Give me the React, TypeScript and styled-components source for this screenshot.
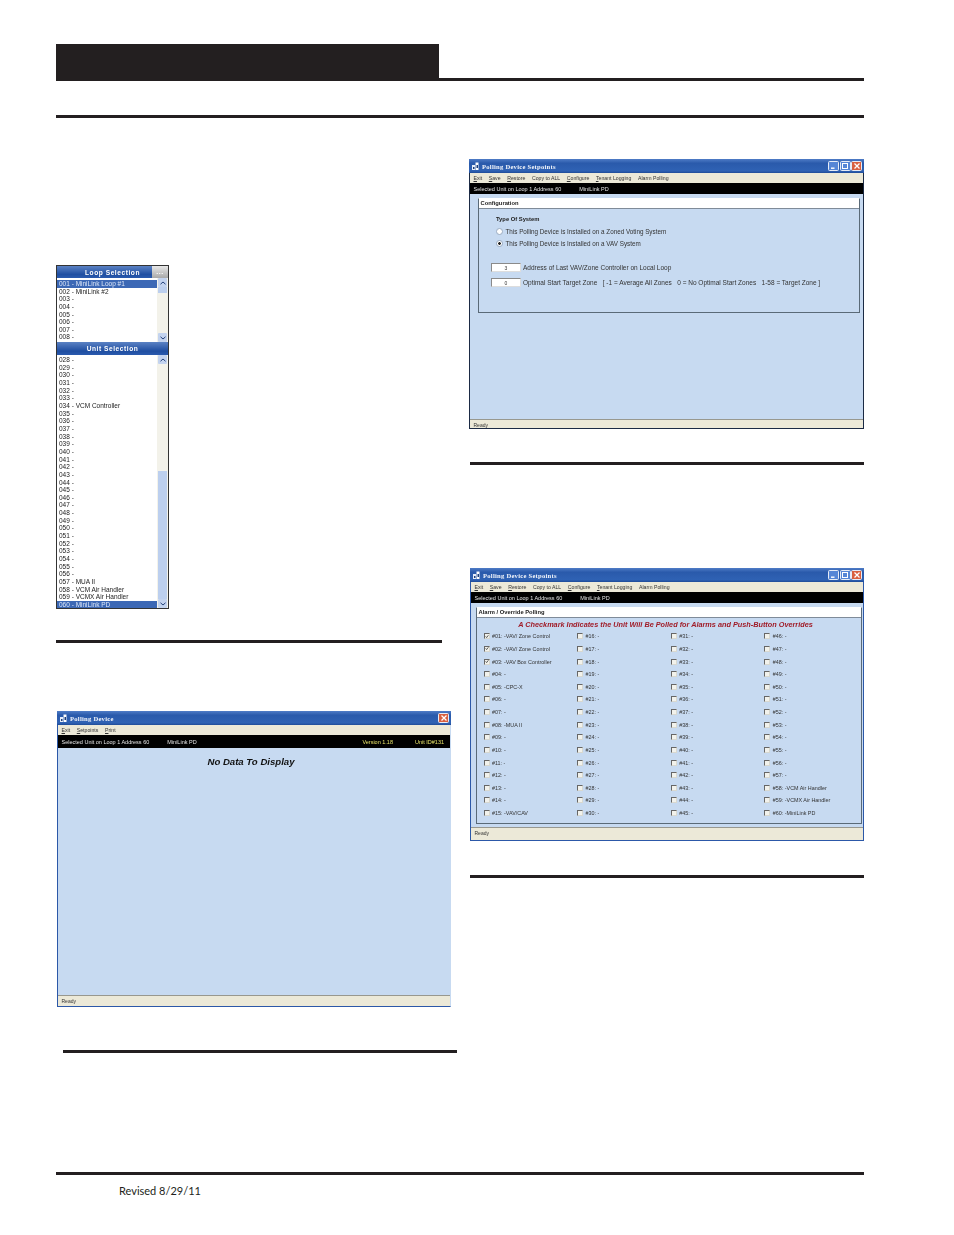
import React from 'react'
import styled, { createGlobalStyle } from 'styled-components'

const GlobalStyle = createGlobalStyle`
    html, body { margin: 0; padding: 0; background: #fff; }
    body { font-family: "Liberation Sans", Arial, sans-serif; }
`

const Page = styled.div`
    width: 954px;
    height: 1235px;
    box-sizing: border-box;
    padding: 44px 90px 0 56px;
    display: flex;
    flex-direction: column;
    overflow: hidden;
`
const Header = styled.div`
    height: 34px;
    border-bottom: 3px solid #231f20;
`
const HeaderBlock = styled.div`
    width: 383px;
    height: 34px;
    background: #231f20;
`
const Rule = styled.div<{ $top: number; $left?: number; $width?: number }>`
    height: 3px;
    flex: none;
    background: #231f20;
    margin-top: ${p => p.$top}px;
    margin-left: ${p => p.$left || 0}px;
    width: ${p => (p.$width ? p.$width + 'px' : 'auto')};
`
const Columns = styled.div`
    display: flex;
    height: 1054px;
`
const LeftCol = styled.div`
    width: 414px;
    flex: none;
    display: flex;
    flex-direction: column;
`
const RightCol = styled.div`
    flex: 1;
    display: flex;
    flex-direction: column;
`
const Footer = styled.div`
    font: 11px Lato, "Liberation Sans", sans-serif;
    color: #231f20;
    margin: 9px 0 0 63px;
`

/* loop / unit picker */
const Picker = styled.div`
    width: 111px;
    height: 342px;
    margin-top: 147px;
    border: 1px solid #333;
    background: #fff;
    display: flex;
    flex-direction: column;
    filter: blur(0.25px);
`
const PickerHead = styled.div<{ $h: number }>`
    height: ${p => p.$h}px;
    flex: none;
    display: flex;
    background: linear-gradient(#5b82c4, #1f4ea1 70%, #2a5aae);
    color: #fff;
    font: bold 6.6px "Liberation Sans", sans-serif;
    letter-spacing: 0.55px;
    align-items: center;
    justify-content: center;
    position: relative;
`
const MoreBtn = styled.span`
    position: absolute;
    right: 0;
    top: 0;
    width: 16px;
    height: 12px;
    background: linear-gradient(#e8e8e8, #a9a9a9);
    color: #fff;
    font-size: 7px;
    text-align: center;
    line-height: 12px;
`
const ListWrap = styled.div<{ $h: number }>`
    height: ${p => p.$h}px;
    flex: none;
    display: flex;
    background: #fff;
    overflow: hidden;
`
const ListBody = styled.div<{ $pt: number }>`
    flex: 1;
    padding-top: ${p => p.$pt}px;
    min-width: 0;
`
const ListRow = styled.div<{ $on?: boolean; $h: number }>`
    height: ${p => p.$h}px;
    line-height: ${p => p.$h}px;
    font-size: 6.5px;
    white-space: nowrap;
    padding-left: 2px;
    color: ${p => (p.$on ? '#dce6f7' : '#222')};
    background: ${p => (p.$on ? '#3c68b5' : 'transparent')};
`
const ScrollTrack = styled.div`
    width: 11px;
    flex: none;
    background: #f3f2ea;
    display: flex;
    flex-direction: column;
    position: relative;
`
const ScrollBtn = styled.div`
    width: 9px;
    height: 9px;
    margin-left: 1px;
    background: #c3d3ef;
    border-radius: 1px;
    display: flex;
    align-items: center;
    justify-content: center;
    flex: none;
`
const ScrollThumb = styled.div<{ $top: number; $h: number }>`
    position: absolute;
    left: 1px;
    top: ${p => p.$top}px;
    width: 9px;
    height: ${p => p.$h}px;
    background: #bccfee;
`
const Spacer = styled.div`
    flex: 1;
`

/* xp style windows */
const Win = styled.div<{ $w: number; $h: number; $top: number; $left: number; $edge: string; $open?: boolean }>`
    width: ${p => p.$w}px;
    height: ${p => p.$h}px;
    flex: none;
    box-sizing: border-box;
    margin-top: ${p => p.$top}px;
    margin-left: ${p => p.$left}px;
    border: 1px solid ${p => p.$edge};
    border-left-width: 1.5px;
    border-top: 0;
    border-right-color: ${p => (p.$open ? 'transparent' : p.$edge)};
    background: #c7daf1;
    display: flex;
    flex-direction: column;
    filter: blur(0.3px);
`
const TitleBar = styled.div`
    height: 14px;
    flex: none;
    margin: 0 -1px;
    padding: 0 2px 0 3px;
    display: flex;
    align-items: center;
    gap: 2px;
    background: linear-gradient(#4f7cc6, #2a5aab 30%, #2f62b4 85%, #1f4b98);
    color: #f2f5fb;
    font: bold 6.6px "Liberation Serif", serif;
    letter-spacing: 0.25px;
`
const TitleText = styled.span`
    flex: 1;
`
const WinBtn = styled.span<{ $close?: boolean }>`
    width: 11px;
    height: 10.5px;
    box-sizing: border-box;
    border: 0.5px solid #e6ecf7;
    border-radius: 1.5px;
    background: ${p => (p.$close ? '#d9603f' : '#5686d6')};
    display: flex;
    align-items: center;
    justify-content: center;
    margin-left: -1.5px;
`
const MenuBar = styled.div`
    height: 10px;
    flex: none;
    background: #ece9d8;
    display: flex;
    align-items: center;
    gap: 6.6px;
    padding-left: 3.5px;
    font-size: 5.2px;
    color: #333;
`
const InfoBar = styled.div<{ $h: number }>`
    height: ${p => p.$h}px;
    flex: none;
    background: #000;
    color: #e4e4e4;
    font-size: 5.5px;
    display: flex;
    align-items: center;
    padding: 0 6px 0 3.5px;
`
const InfoUnit = styled.span`
    margin-left: 18px;
    flex: 1;
`
const InfoExtra = styled.span`
    color: #e6e26a;
    margin-left: 22px;
`
const Content = styled.div`
    flex: 1;
    min-height: 0;
    display: flex;
    flex-direction: column;
`
const EmptyNote = styled.div`
    text-align: center;
    font: italic bold 9.6px "Liberation Sans", sans-serif;
    color: #111;
    margin: 8px 6px 0 0;
`
const Status = styled.div<{ $h: number }>`
    height: ${p => p.$h}px;
    flex: none;
    overflow: hidden;
    border-top: 1px solid #98988f;
    background: #ece9d8;
    font-size: 5px;
    line-height: 10px;
    padding-left: 3.5px;
    color: #333;
`
const Group = styled.div<{ $mt: number; $ml: number; $mr: number; $h: number }>`
    margin: ${p => p.$mt}px ${p => p.$mr}px 0 ${p => p.$ml}px;
    height: ${p => p.$h}px;
    box-sizing: border-box;
    border: 1px solid #5a6a78;
    border-top-color: #fff;
`
const GroupHead = styled.div`
    height: 9px;
    background: #fff;
    border-bottom: 1px solid #7f8b99;
    font: bold 5.8px/9px "Liberation Sans", sans-serif;
    padding-left: 1.5px;
    color: #222;
`
const TypeBlock = styled.div`
    padding: 7px 0 0 17px;
    display: flex;
    flex-direction: column;
    gap: 6px;
    height: 54px;
    box-sizing: border-box;
`
const TypeTitle = styled.div`
    font: bold 5.8px "Liberation Sans", sans-serif;
    color: #222;
    margin-bottom: 0.5px;
`
const RadioRow = styled.div`
    display: flex;
    align-items: center;
    gap: 2.5px;
    font-size: 6.3px;
    height: 6px;
    color: #333;
`
const Radio = styled.span<{ $on?: boolean }>`
    width: 5px;
    height: 5px;
    border-radius: 50%;
    background: ${p => (p.$on ? 'radial-gradient(#222 30%, #fff 45%)' : '#fff')};
    border: 0.5px solid #9aabc2;
`
const FieldRow = styled.div`
    display: flex;
    align-items: center;
    gap: 2px;
    margin: 0 0 6px 12px;
    height: 9px;
    font-size: 6.5px;
    white-space: pre;
    color: #333;
`
const Field = styled.span`
    width: 30px;
    height: 9px;
    box-sizing: border-box;
    background: #fff;
    border: 0.5px solid #8a8a8a;
    border-right-color: #ddd;
    border-bottom-color: #ddd;
    text-align: center;
    font-size: 5px;
    line-height: 8px;
`
const Banner = styled.div`
    font: italic bold 7.3px "Liberation Sans", sans-serif;
    color: #a01c28;
    text-align: center;
    height: 12px;
    line-height: 13px;
    margin-right: 7px;
`
const CheckGrid = styled.div`
    display: grid;
    grid-template-rows: repeat(15, 12.64px);
    grid-template-columns: repeat(4, 93.6px);
    grid-auto-flow: column;
    padding-left: 6.5px;
`
const CheckItem = styled.div`
    display: flex;
    align-items: center;
    gap: 2.5px;
    font-size: 5.4px;
    white-space: nowrap;
    color: #333;
`
const Box = styled.span`
    width: 6px;
    height: 6px;
    flex: none;
    box-sizing: border-box;
    background: #f2f2ec;
    border: 0.6px solid #d8d8d0;
    border-top-color: #666;
    border-left-color: #666;
    display: flex;
    align-items: center;
    justify-content: center;
`

const Chevron = ({ up }: { up?: boolean }) => (
    <svg width="6" height="4" viewBox="0 0 6 4">
        <path d={up ? 'M0.5 3.2 3 1 5.5 3.2' : 'M0.5 0.8 3 3 5.5 0.8'} fill="none" stroke="#23407a" strokeWidth="1" />
    </svg>
)

const AppIcon = () => (
    <svg width="8" height="8" viewBox="0 0 8 8">
        <rect x="0" y="3" width="3" height="5" fill="#e8eef8" />
        <rect x="3.5" y="0.5" width="3" height="7.5" fill="#fff" />
        <rect x="1" y="5" width="1.5" height="2" fill="#1d3f7a" />
        <rect x="4.5" y="3" width="1.5" height="3" fill="#1d3f7a" />
    </svg>
)

const Controls = ({ closeOnly }: { closeOnly?: boolean }) => (
    <>
        {!closeOnly && (
            <WinBtn>
                <svg width="8" height="8" viewBox="0 0 8 8"><rect x="1" y="5.5" width="3.5" height="1.4" fill="#fff" /></svg>
            </WinBtn>
        )}
        {!closeOnly && (
            <WinBtn>
                <svg width="8" height="8" viewBox="0 0 8 8"><rect x="1.5" y="1.5" width="5" height="5" fill="none" stroke="#fff" strokeWidth="1" /></svg>
            </WinBtn>
        )}
        <WinBtn $close>
            <svg width="8" height="8" viewBox="0 0 8 8"><path d="M1.5 1.5 6.5 6.5M6.5 1.5 1.5 6.5" stroke="#fff" strokeWidth="1.3" /></svg>
        </WinBtn>
    </>
)

const pad = (n: number) => String(n).padStart(3, '0')

const loopNames: Record<number, string> = { 1: 'MiniLink Loop #1', 2: 'MiniLink #2' }
const unitNames: Record<number, string> = {
    34: 'VCM Controller',
    57: 'MUA II',
    58: 'VCM Air Handler',
    59: 'VCMX Air Handler',
    60: 'MiniLink PD',
}

const loops = Array.from({ length: 8 }, (_, i) => i + 1)
const units = Array.from({ length: 33 }, (_, i) => i + 28)

const unitTags: Record<number, string> = {
    1: '-VAV/ Zone Control',
    2: '-VAV/ Zone Control',
    3: '-VAV Box Controller',
    5: '-CPC-X',
    8: '-MUA II',
    15: '-VAV/CAV',
    58: '-VCM Air Handler',
    59: '-VCMX Air Handler',
    60: '-MiniLink PD',
}
const polled = Array.from({ length: 60 }, (_, i) => i + 1)

const setpointMenu: [string, string][] = [
    ['E', 'xit'],
    ['S', 'ave'],
    ['R', 'estore'],
    ['', 'Copy to ALL'],
    ['C', 'onfigure'],
    ['T', 'enant Logging'],
    ['', 'Alarm Polling'],
]
const deviceMenu: [string, string][] = [
    ['E', 'xit'],
    ['S', 'etpoints'],
    ['P', 'rint'],
]

const Menu = ({ items }: { items: [string, string][] }) => (
    <MenuBar>
        {items.map(([k, rest]) => (
            <span key={k + rest}>
                {k && <u>{k}</u>}
                {rest}
            </span>
        ))}
    </MenuBar>
)

function App() {
    return (
        <Page>
            <GlobalStyle />
            <Header>
                <HeaderBlock />
            </Header>
            <Rule $top={34} />
            <Columns>
                <LeftCol>
                    <Picker>
                        <PickerHead $h={12}>
                            Loop Selection
                            <MoreBtn>...</MoreBtn>
                        </PickerHead>
                        <ListWrap $h={64}>
                            <ListBody $pt={2}>
                                {loops.map(n => (
                                    <ListRow key={n} $h={7.65} $on={n === 1}>
                                        {pad(n)} - {loopNames[n] || ''}
                                    </ListRow>
                                ))}
                            </ListBody>
                            <ScrollTrack>
                                <ScrollBtn><Chevron up /></ScrollBtn>
                                <ScrollThumb $top={9} $h={6} />
                                <Spacer />
                                <ScrollBtn><Chevron /></ScrollBtn>
                            </ScrollTrack>
                        </ListWrap>
                        <PickerHead $h={13}>Unit Selection</PickerHead>
                        <ListWrap $h={253}>
                            <ListBody $pt={1}>
                                {units.map(n => (
                                    <ListRow key={n} $h={7.66} $on={n === 60}>
                                        {pad(n)} - {unitNames[n] || ''}
                                    </ListRow>
                                ))}
                            </ListBody>
                            <ScrollTrack>
                                <ScrollBtn><Chevron up /></ScrollBtn>
                                <ScrollThumb $top={116} $h={128} />
                                <Spacer />
                                <ScrollBtn><Chevron /></ScrollBtn>
                            </ScrollTrack>
                        </ListWrap>
                    </Picker>
                    <Rule $top={31} $width={386} />
                    <Win $w={394} $h={296} $top={68} $left={1} $edge="#2c58a8" $open>
                        <TitleBar>
                            <AppIcon />
                            <TitleText>Polling Device</TitleText>
                            <Controls closeOnly />
                        </TitleBar>
                        <Menu items={deviceMenu} />
                        <InfoBar $h={13}>
                            Selected Unit on Loop 1 Address 60
                            <InfoUnit>MiniLink PD</InfoUnit>
                            <InfoExtra>Version 1.18</InfoExtra>
                            <InfoExtra>Unit ID#131</InfoExtra>
                        </InfoBar>
                        <Content>
                            <EmptyNote>No Data To Display</EmptyNote>
                        </Content>
                        <Status $h={10}>Ready</Status>
                    </Win>
                    <Rule $top={43} $left={7} $width={394} />
                </LeftCol>
                <RightCol>
                    <Win $w={395} $h={270} $top={41} $left={-1} $edge="#1b2a44">
                        <TitleBar>
                            <AppIcon />
                            <TitleText>Polling Device Setpoints</TitleText>
                            <Controls />
                        </TitleBar>
                        <Menu items={setpointMenu} />
                        <InfoBar $h={11}>
                            Selected Unit on Loop 1 Address 60
                            <InfoUnit>MiniLink PD</InfoUnit>
                        </InfoBar>
                        <Content>
                            <Group $mt={4} $ml={8} $mr={3} $h={115}>
                                <GroupHead>Configuration</GroupHead>
                                <TypeBlock>
                                    <TypeTitle>Type Of System</TypeTitle>
                                    <RadioRow><Radio />This Polling Device is Installed on a Zoned Voting System</RadioRow>
                                    <RadioRow><Radio $on />This Polling Device is Installed on a VAV System</RadioRow>
                                </TypeBlock>
                                <FieldRow>
                                    <Field>3</Field>
                                    Address of Last VAV/Zone Controller on Local Loop
                                </FieldRow>
                                <FieldRow>
                                    <Field>0</Field>
                                    {'Optimal Start Target Zone   [ -1 = Average All Zones   0 = No Optimal Start Zones   1-58 = Target Zone ]'}
                                </FieldRow>
                            </Group>
                        </Content>
                        <Status $h={8}>Ready</Status>
                    </Win>
                    <Rule $top={33} />
                    <Win $w={394} $h={273} $top={103} $left={0} $edge="#2c58a8">
                        <TitleBar>
                            <AppIcon />
                            <TitleText>Polling Device Setpoints</TitleText>
                            <Controls />
                        </TitleBar>
                        <Menu items={setpointMenu} />
                        <InfoBar $h={11}>
                            Selected Unit on Loop 1 Address 60
                            <InfoUnit>MiniLink PD</InfoUnit>
                        </InfoBar>
                        <Content>
                            <Group $mt={4} $ml={5} $mr={1} $h={217}>
                                <GroupHead>Alarm / Override Polling</GroupHead>
                                <Banner>A Checkmark Indicates the Unit Will Be Polled for Alarms and Push-Button Overrides</Banner>
                                <CheckGrid>
                                    {polled.map(n => (
                                        <CheckItem key={n}>
                                            <Box>
                                                {n <= 3 && (
                                                    <svg width="5" height="5" viewBox="0 0 5 5">
                                                        <path d="M0.8 2.4 2 3.8 4.2 1" fill="none" stroke="#222" strokeWidth="0.9" />
                                                    </svg>
                                                )}
                                            </Box>
                                            #{String(n).padStart(2, '0')}: {unitTags[n] || '-'}
                                        </CheckItem>
                                    ))}
                                </CheckGrid>
                            </Group>
                        </Content>
                        <Status $h={12}>Ready</Status>
                    </Win>
                    <Rule $top={34} />
                </RightCol>
            </Columns>
            <Rule $top={0} />
            <Footer>Revised 8/29/11</Footer>
        </Page>
    )
}

export default App
